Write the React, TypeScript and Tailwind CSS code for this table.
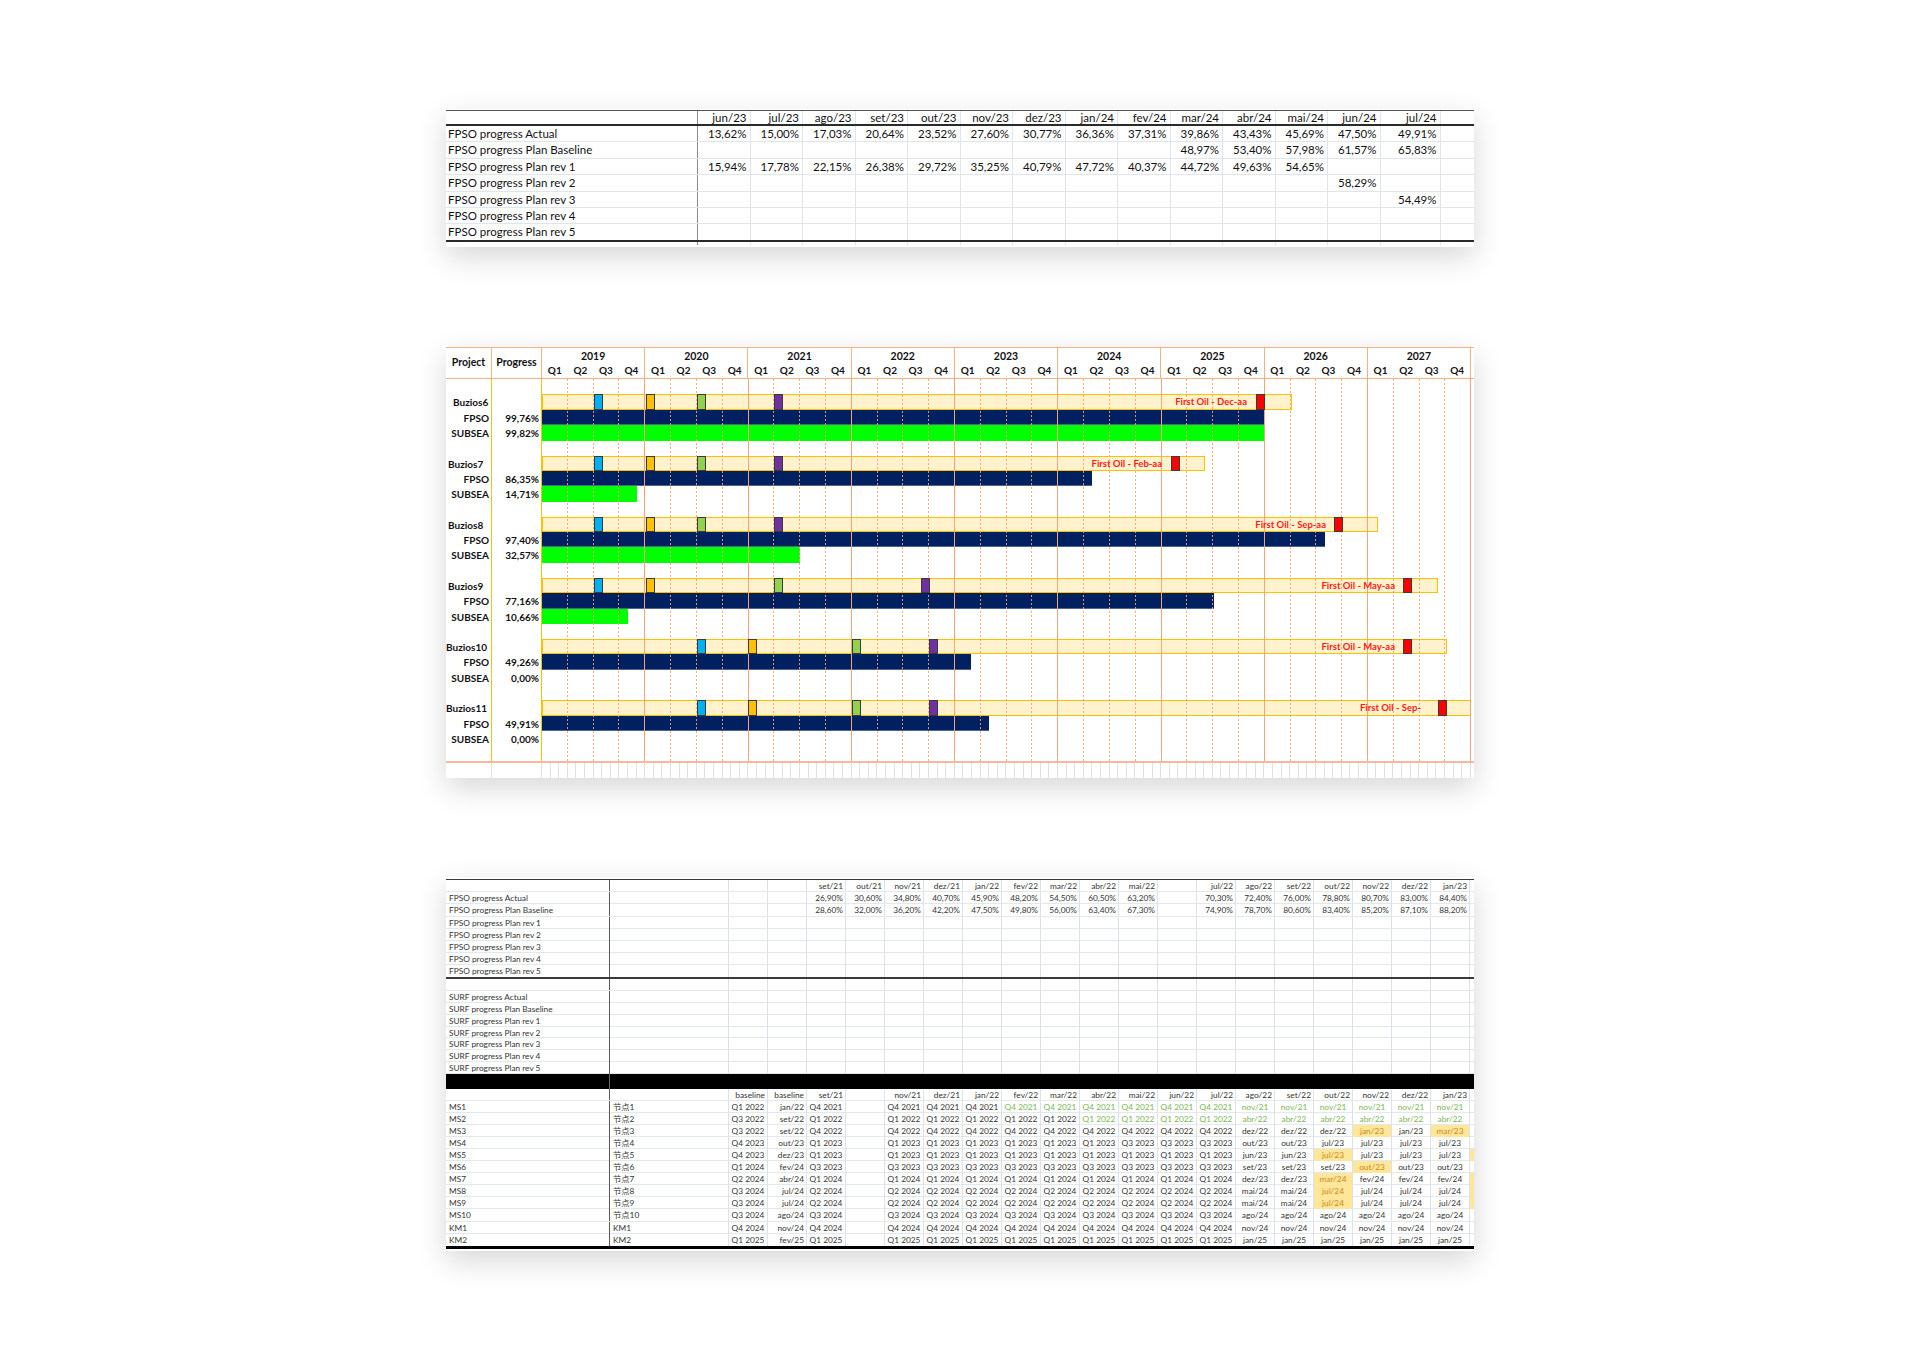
import React from 'react';

const FONT = "font-['Lato','Liberation_Sans','Noto_Sans_CJK_SC',sans-serif]";

// ---------- top table ----------
const topMonths = ['jun/23', 'jul/23', 'ago/23', 'set/23', 'out/23', 'nov/23', 'dez/23', 'jan/24', 'fev/24', 'mar/24', 'abr/24', 'mai/24', 'jun/24', 'jul/24'];
const blank = (n: number) => Array.from({ length: n }, () => '');
const topRows = [
  { label: 'FPSO progress Actual', values: ['13,62%', '15,00%', '17,03%', '20,64%', '23,52%', '27,60%', '30,77%', '36,36%', '37,31%', '39,86%', '43,43%', '45,69%', '47,50%', '49,91%'] },
  { label: 'FPSO progress Plan Baseline', values: [...blank(9), '48,97%', '53,40%', '57,98%', '61,57%', '65,83%'] },
  { label: 'FPSO progress Plan rev 1', values: ['15,94%', '17,78%', '22,15%', '26,38%', '29,72%', '35,25%', '40,79%', '47,72%', '40,37%', '44,72%', '49,63%', '54,65%', '', ''] },
  { label: 'FPSO progress Plan rev 2', values: [...blank(12), '58,29%', ''] },
  { label: 'FPSO progress Plan rev 3', values: [...blank(13), '54,49%'] },
  { label: 'FPSO progress Plan rev 4', values: blank(14) },
  { label: 'FPSO progress Plan rev 5', values: blank(14) },
];

const topCols = 'grid grid-cols-[252px_repeat(13,52.5px)_60px_1fr]';

const TopTable: React.FC = () => (
  <div className="w-[1028px] bg-white pt-[1px] pb-[2px] text-[11.5px] text-[#111] shadow-[0_10px_28px_rgba(0,0,0,0.16)]">
    <div className={`${topCols} h-[16px] border-t border-t-[#555] border-b-2 border-b-[#2a2a2a]`}>
      <div className="border-r border-r-[#8c8c8c]" />
      {topMonths.map((m) => (
        <div key={m} className="border-r border-r-[#e0e4ec] pr-[3px] text-right leading-[13px]">{m}</div>
      ))}
      <div />
    </div>
    {topRows.map((r, i) => (
      <div
        key={r.label}
        className={`${topCols} ${i === topRows.length - 1 ? 'h-[18px] border-b-2 border-b-[#2a2a2a]' : 'h-[16.4px] border-b border-b-[#e0e4ec]'}`}
      >
        <div className="border-r border-r-[#8c8c8c] pl-[2px] leading-[15px] whitespace-nowrap">{r.label}</div>
        {r.values.map((v, j) => (
          <div key={j} className="border-r border-r-[#e0e4ec] pr-[3px] text-right leading-[15px]">{v}</div>
        ))}
        <div />
      </div>
    ))}
    <div className={`${topCols} h-[3px]`}>
      <div className="border-r border-r-[#8c8c8c]" />
      {topMonths.map((m) => (
        <div key={m} className="border-r border-r-[#e0e4ec]" />
      ))}
      <div />
    </div>
  </div>
);

// ---------- gantt ----------
const YEARS = [2019, 2020, 2021, 2022, 2023, 2024, 2025, 2026, 2027];
const TL = 929;

type Mark = [number, string];
const earlyMarks: Mark[] = [[52, '#00b0f0'], [104, '#ffc000'], [155, '#92d050'], [232, '#7030a0']];
const lateMarks: Mark[] = [[155, '#00b0f0'], [206, '#ffc000'], [310, '#92d050'], [387, '#7030a0']];

const projects = [
  { name: 'Buzios6', pad: 'pl-[7px]', fpso: '99,76%', subsea: '99,82%', barEnd: 750, marks: earlyMarks, red: 714, oil: 'First Oil - Dec-aa', gap: 9, fpsoEnd: 722, subseaEnd: 723 },
  { name: 'Buzios7', pad: 'pl-[2px]', fpso: '86,35%', subsea: '14,71%', barEnd: 663, marks: earlyMarks, red: 629, oil: 'First Oil - Feb-aa', gap: 9, fpsoEnd: 550, subseaEnd: 95 },
  { name: 'Buzios8', pad: 'pl-[2px]', fpso: '97,40%', subsea: '32,57%', barEnd: 836, marks: earlyMarks, red: 792, oil: 'First Oil - Sep-aa', gap: 8, fpsoEnd: 783, subseaEnd: 258 },
  { name: 'Buzios9', pad: 'pl-[2px]', fpso: '77,16%', subsea: '10,66%', barEnd: 896, marks: [[52, '#00b0f0'], [104, '#ffc000'], [232, '#92d050'], [379, '#7030a0']] as Mark[], red: 861, oil: 'First Oil - May-aa', gap: 8, fpsoEnd: 672, subseaEnd: 86 },
  { name: 'Buzios10', pad: 'pl-0', fpso: '49,26%', subsea: '0,00%', barEnd: 905, marks: lateMarks, red: 861, oil: 'First Oil - May-aa', gap: 8, fpsoEnd: 429, subseaEnd: 0 },
  { name: 'Buzios11', pad: 'pl-0', fpso: '49,91%', subsea: '0,00%', barEnd: TL, marks: lateMarks, red: 896, oil: 'First Oil - Sep-', gap: 17, fpsoEnd: 447, subseaEnd: 0 },
];

const GridOverlay: React.FC = () => (
  <div className="pointer-events-none absolute inset-0 z-10 flex">
    {Array.from({ length: 36 }).map((_, i) => (
      <div key={i} className="relative flex-1">
        {(i + 1) % 4 === 0 ? (
          <div className="absolute right-0 top-0 h-full w-px bg-[#f2a678]" />
        ) : (
          <div className="absolute right-0 top-0 h-full w-px bg-[repeating-linear-gradient(to_bottom,#f3a270_0_2px,transparent_2px_4px)] opacity-90" />
        )}
      </div>
    ))}
  </div>
);

const Gantt: React.FC = () => (
  <div className="w-[1028px] bg-white font-bold text-[10px] text-[#111] shadow-[0_10px_28px_rgba(0,0,0,0.16)]">
    {/* header */}
    <div className="flex h-[32px] border-y border-[#f4b183]">
      <div className="flex w-[46px] items-center justify-center border-r border-r-[#f4b183] text-[10.5px]">Project</div>
      <div className="flex w-[50px] items-center justify-center border-r border-r-[#f4b183] text-[10.5px]">Progress</div>
      <div className="flex w-[929px]">
        {YEARS.map((y) => (
          <div key={y} className="flex flex-1 flex-col border-r border-r-[#f4b183]">
            <div className="h-[15px] text-center text-[10.5px] leading-[16px]">{y}</div>
            <div className="flex h-[15px]">
              {['Q1', 'Q2', 'Q3', 'Q4'].map((q) => (
                <div key={q} className="flex-1 text-center leading-[15px]">{q}</div>
              ))}
            </div>
          </div>
        ))}
      </div>
      <div className="flex-1" />
    </div>

    {/* body */}
    <div className="flex border-b-2 border-b-[#f6b999]">
      <div className="w-[46px] border-r border-r-[#ffc000]">
        {projects.map((p) => (
          <div key={p.name}>
            <div className="h-[15px]" />
            <div className={`h-[15.4px] whitespace-nowrap leading-[16px] ${p.pad}`}>{p.name}</div>
            <div className="h-[15.4px] pr-[2px] text-right leading-[16px]">FPSO</div>
            <div className="h-[15.4px] pr-[2px] text-right leading-[16px]">SUBSEA</div>
          </div>
        ))}
        <div className="h-[15px]" />
      </div>
      <div className="w-[50px] border-r border-r-[#ffc000]">
        {projects.map((p) => (
          <div key={p.name}>
            <div className="h-[15px]" />
            <div className="h-[15.4px]" />
            <div className="h-[15.4px] pr-[2px] text-right leading-[16px]">{p.fpso}</div>
            <div className="h-[15.4px] pr-[2px] text-right leading-[16px]">{p.subsea}</div>
          </div>
        ))}
        <div className="h-[15px]" />
      </div>
      <div className="relative w-[929px]">
        {projects.map((p) => (
          <div key={p.name}>
            <div className="h-[15px]" />
            <div className="relative h-[15.4px]">
              <div className="absolute inset-y-0 left-0 border border-[#ffc000] bg-[#fff2cc]" style={{ width: p.barEnd }} />
              {p.marks.map(([x, c]) => (
                <div key={x} className="absolute inset-y-0 z-20 w-[9px] border border-[#3a3a3a]" style={{ left: x, backgroundColor: c }} />
              ))}
              <span
                className="absolute top-0 z-20 whitespace-nowrap text-[9.5px] leading-[16px] text-[#ff1a1a]"
                style={{ right: TL - p.red + p.gap }}
              >
                {p.oil}
              </span>
              <div className="absolute inset-y-0 z-20 w-[9px] border border-[#3a3a3a] bg-[#ff0000]" style={{ left: p.red }} />
            </div>
            <div className="relative h-[15.4px]">
              <div className="absolute inset-y-0 left-0 border-b border-b-[#4d6390] bg-[#002060]" style={{ width: p.fpsoEnd }} />
            </div>
            <div className="relative h-[15.4px]">
              {p.subseaEnd > 0 && <div className="absolute inset-y-0 left-0 bg-[#00ff00]" style={{ width: p.subseaEnd }} />}
            </div>
          </div>
        ))}
        <div className="h-[15px]" />
        <GridOverlay />
      </div>
      <div className="flex-1" />
    </div>

    {/* excel gridline strip */}
    <div className="flex h-[15px]">
      <div className="w-[46px] border-r border-r-[#dfe3ea]" />
      <div className="w-[50px] border-r border-r-[#dfe3ea]" />
      <div className="w-[929px] bg-[repeating-linear-gradient(to_right,transparent_0_7.6px,#dde2ea_7.6px_8.6px)]" />
      <div className="flex-1" />
    </div>
  </div>
);

// ---------- lower sheet ----------
type Cell = string | { t: string; k: 'g' | 'h' };
const rep = (v: string, n: number): string[] => Array.from({ length: n }, () => v);
const g = (v: string, n: number): Cell[] => Array.from({ length: n }, () => ({ t: v, k: 'g' as const }));
const h = (v: string): Cell => ({ t: v, k: 'h' });

const midCols = 'grid grid-cols-[164px_119px_repeat(19,39px)_1fr]';

const midHeader = ['', '', 'set/21', 'out/21', 'nov/21', 'dez/21', 'jan/22', 'fev/22', 'mar/22', 'abr/22', 'mai/22', '', 'jul/22', 'ago/22', 'set/22', 'out/22', 'nov/22', 'dez/22', 'jan/23'];
const fpsoRows: { label: string; cells: string[] }[] = [
  { label: 'FPSO progress Actual', cells: ['', '', '26,90%', '30,60%', '34,80%', '40,70%', '45,90%', '48,20%', '54,50%', '60,50%', '63,20%', '', '70,30%', '72,40%', '76,00%', '78,80%', '80,70%', '83,00%', '84,40%'] },
  { label: 'FPSO progress Plan Baseline', cells: ['', '', '28,60%', '32,00%', '36,20%', '42,20%', '47,50%', '49,80%', '56,00%', '63,40%', '67,30%', '', '74,90%', '78,70%', '80,60%', '83,40%', '85,20%', '87,10%', '88,20%'] },
  { label: 'FPSO progress Plan rev 1', cells: blank(19) },
  { label: 'FPSO progress Plan rev 2', cells: blank(19) },
  { label: 'FPSO progress Plan rev 3', cells: blank(19) },
  { label: 'FPSO progress Plan rev 4', cells: blank(19) },
  { label: 'FPSO progress Plan rev 5', cells: blank(19) },
];
const surfRows = ['', 'SURF progress Actual', 'SURF progress Plan Baseline', 'SURF progress Plan rev 1', 'SURF progress Plan rev 2', 'SURF progress Plan rev 3', 'SURF progress Plan rev 4', 'SURF progress Plan rev 5'];

const msHeader = ['baseline', 'baseline', 'set/21', '', 'nov/21', 'dez/21', 'jan/22', 'fev/22', 'mar/22', 'abr/22', 'mai/22', 'jun/22', 'jul/22', 'ago/22', 'set/22', 'out/22', 'nov/22', 'dez/22', 'jan/23'];
const msRows: { a: string; b: string; head: string[]; rest: Cell[]; tail?: boolean }[] = [
  { a: 'MS1', b: '节点1', head: ['Q1 2022', 'jan/22', 'Q4 2021'], rest: [...rep('Q4 2021', 3), ...g('Q4 2021', 6), ...g('nov/21', 6)] },
  { a: 'MS2', b: '节点2', head: ['Q3 2022', 'set/22', 'Q1 2022'], rest: [...rep('Q1 2022', 5), ...g('Q1 2022', 4), ...g('abr/22', 6)] },
  { a: 'MS3', b: '节点3', head: ['Q3 2022', 'set/22', 'Q4 2022'], rest: [...rep('Q4 2022', 9), 'dez/22', 'dez/22', 'dez/22', h('jan/23'), 'jan/23', h('mar/23')] },
  { a: 'MS4', b: '节点4', head: ['Q4 2023', 'out/23', 'Q1 2023'], rest: [...rep('Q1 2023', 6), ...rep('Q3 2023', 3), 'out/23', 'out/23', ...rep('jul/23', 4)] },
  { a: 'MS5', b: '节点5', head: ['Q4 2023', 'dez/23', 'Q1 2023'], rest: [...rep('Q1 2023', 9), 'jun/23', 'jun/23', h('jul/23'), ...rep('jul/23', 3)], tail: true },
  { a: 'MS6', b: '节点6', head: ['Q1 2024', 'fev/24', 'Q3 2023'], rest: [...rep('Q3 2023', 9), 'set/23', 'set/23', 'set/23', h('out/23'), 'out/23', 'out/23'] },
  { a: 'MS7', b: '节点7', head: ['Q2 2024', 'abr/24', 'Q1 2024'], rest: [...rep('Q1 2024', 9), 'dez/23', 'dez/23', h('mar/24'), ...rep('fev/24', 3)], tail: true },
  { a: 'MS8', b: '节点8', head: ['Q3 2024', 'jul/24', 'Q2 2024'], rest: [...rep('Q2 2024', 9), 'mai/24', 'mai/24', h('jul/24'), ...rep('jul/24', 3)], tail: true },
  { a: 'MS9', b: '节点9', head: ['Q3 2024', 'jul/24', 'Q2 2024'], rest: [...rep('Q2 2024', 9), 'mai/24', 'mai/24', h('jul/24'), ...rep('jul/24', 3)], tail: true },
  { a: 'MS10', b: '节点10', head: ['Q3 2024', 'ago/24', 'Q3 2024'], rest: [...rep('Q3 2024', 9), ...rep('ago/24', 6)] },
  { a: 'KM1', b: 'KM1', head: ['Q4 2024', 'nov/24', 'Q4 2024'], rest: [...rep('Q4 2024', 9), ...rep('nov/24', 6)] },
  { a: 'KM2', b: 'KM2', head: ['Q1 2025', 'fev/25', 'Q1 2025'], rest: [...rep('Q1 2025', 9), ...rep('jan/25', 6)] },
];

const cellBase = 'border-r border-r-[#dde2ea] overflow-hidden whitespace-nowrap';

const LowerSheet: React.FC = () => (
  <div className="w-[1028px] bg-white pt-[2px] pb-[2px] text-[8.3px] text-[#333] shadow-[0_10px_28px_rgba(0,0,0,0.16)]">
    {/* progress header */}
    <div className={`${midCols} h-[13px] border-t border-t-[#3a3a3a] border-b border-b-[#e3e7ee]`}>
      <div className="border-r border-r-[#5a5a5a]" />
      <div className={cellBase} />
      {midHeader.map((m, j) => (
        <div key={j} className={`${cellBase} pr-[2px] text-right leading-[13px]`}>{m}</div>
      ))}
      <div />
    </div>
    {fpsoRows.map((r, i) => (
      <div
        key={r.label}
        className={`${midCols} ${i === fpsoRows.length - 1 ? 'h-[14px] border-b-2 border-b-[#3a3a3a]' : 'h-[12.1px] border-b border-b-[#e3e7ee]'}`}
      >
        <div className="border-r border-r-[#5a5a5a] pl-[3px] leading-[12px] whitespace-nowrap">{r.label}</div>
        <div className={cellBase} />
        {r.cells.map((c, j) => (
          <div key={j} className={`${cellBase} pr-[2px] text-right leading-[12px]`}>{c}</div>
        ))}
        <div />
      </div>
    ))}
    {surfRows.map((label, i) => (
      <div key={i} className={`${midCols} h-[11.9px] border-b border-b-[#e3e7ee]`}>
        <div className="border-r border-r-[#5a5a5a] pl-[3px] leading-[12px] whitespace-nowrap">{label}</div>
        <div className={cellBase} />
        {blank(19).map((_, j) => (
          <div key={j} className={cellBase} />
        ))}
        <div />
      </div>
    ))}

    {/* black divider */}
    <div className="grid h-[14.5px] grid-cols-[164px_1fr] bg-black">
      <div className="border-r border-r-[#6a6a6a]" />
      <div />
    </div>

    {/* milestone header */}
    <div className={`${midCols} h-[12px] border-b border-b-[#e3e7ee]`}>
      <div className="border-r border-r-[#5a5a5a]" />
      <div className={cellBase} />
      {msHeader.map((m, j) => (
        <div key={j} className={`${cellBase} pr-[2px] text-right leading-[12px]`}>{m}</div>
      ))}
      <div />
    </div>
    {msRows.map((r, i) => (
      <div
        key={r.a}
        className={`${midCols} ${i === msRows.length - 1 ? 'h-[15.1px] border-b-[3px] border-b-black' : 'h-[12.1px] border-b border-b-[#e3e7ee]'}`}
      >
        <div className="border-r border-r-[#5a5a5a] pl-[3px] leading-[12px]">{r.a}</div>
        <div className={`${cellBase} pl-[3px] leading-[12px]`}>{r.b}</div>
        <div className={`${cellBase} text-center leading-[12px]`}>{r.head[0]}</div>
        <div className={`${cellBase} pr-[2px] text-right leading-[12px]`}>{r.head[1]}</div>
        <div className={`${cellBase} text-center leading-[12px]`}>{r.head[2]}</div>
        <div className={cellBase} />
        {r.rest.map((c, j) => {
          if (typeof c === 'string') {
            return <div key={j} className={`${cellBase} text-center leading-[12px]`}>{c}</div>;
          }
          return c.k === 'g' ? (
            <div key={j} className={`${cellBase} text-center leading-[12px] text-[#7ab554]`}>{c.t}</div>
          ) : (
            <div key={j} className={`${cellBase} bg-[#ffe699] text-center leading-[12px] text-[#c8861c]`}>{c.t}</div>
          );
        })}
        <div className={r.tail ? 'bg-[#ffe699]' : ''} />
      </div>
    ))}
  </div>
);

const App: React.FC = () => (
  <div className={`flex min-h-[1358px] w-full flex-col items-center bg-white pt-[109px] ${FONT}`}>
    <TopTable />
    <div className="mt-[100px]">
      <Gantt />
    </div>
    <div className="mt-[99px]">
      <LowerSheet />
    </div>
  </div>
);

export default App;
